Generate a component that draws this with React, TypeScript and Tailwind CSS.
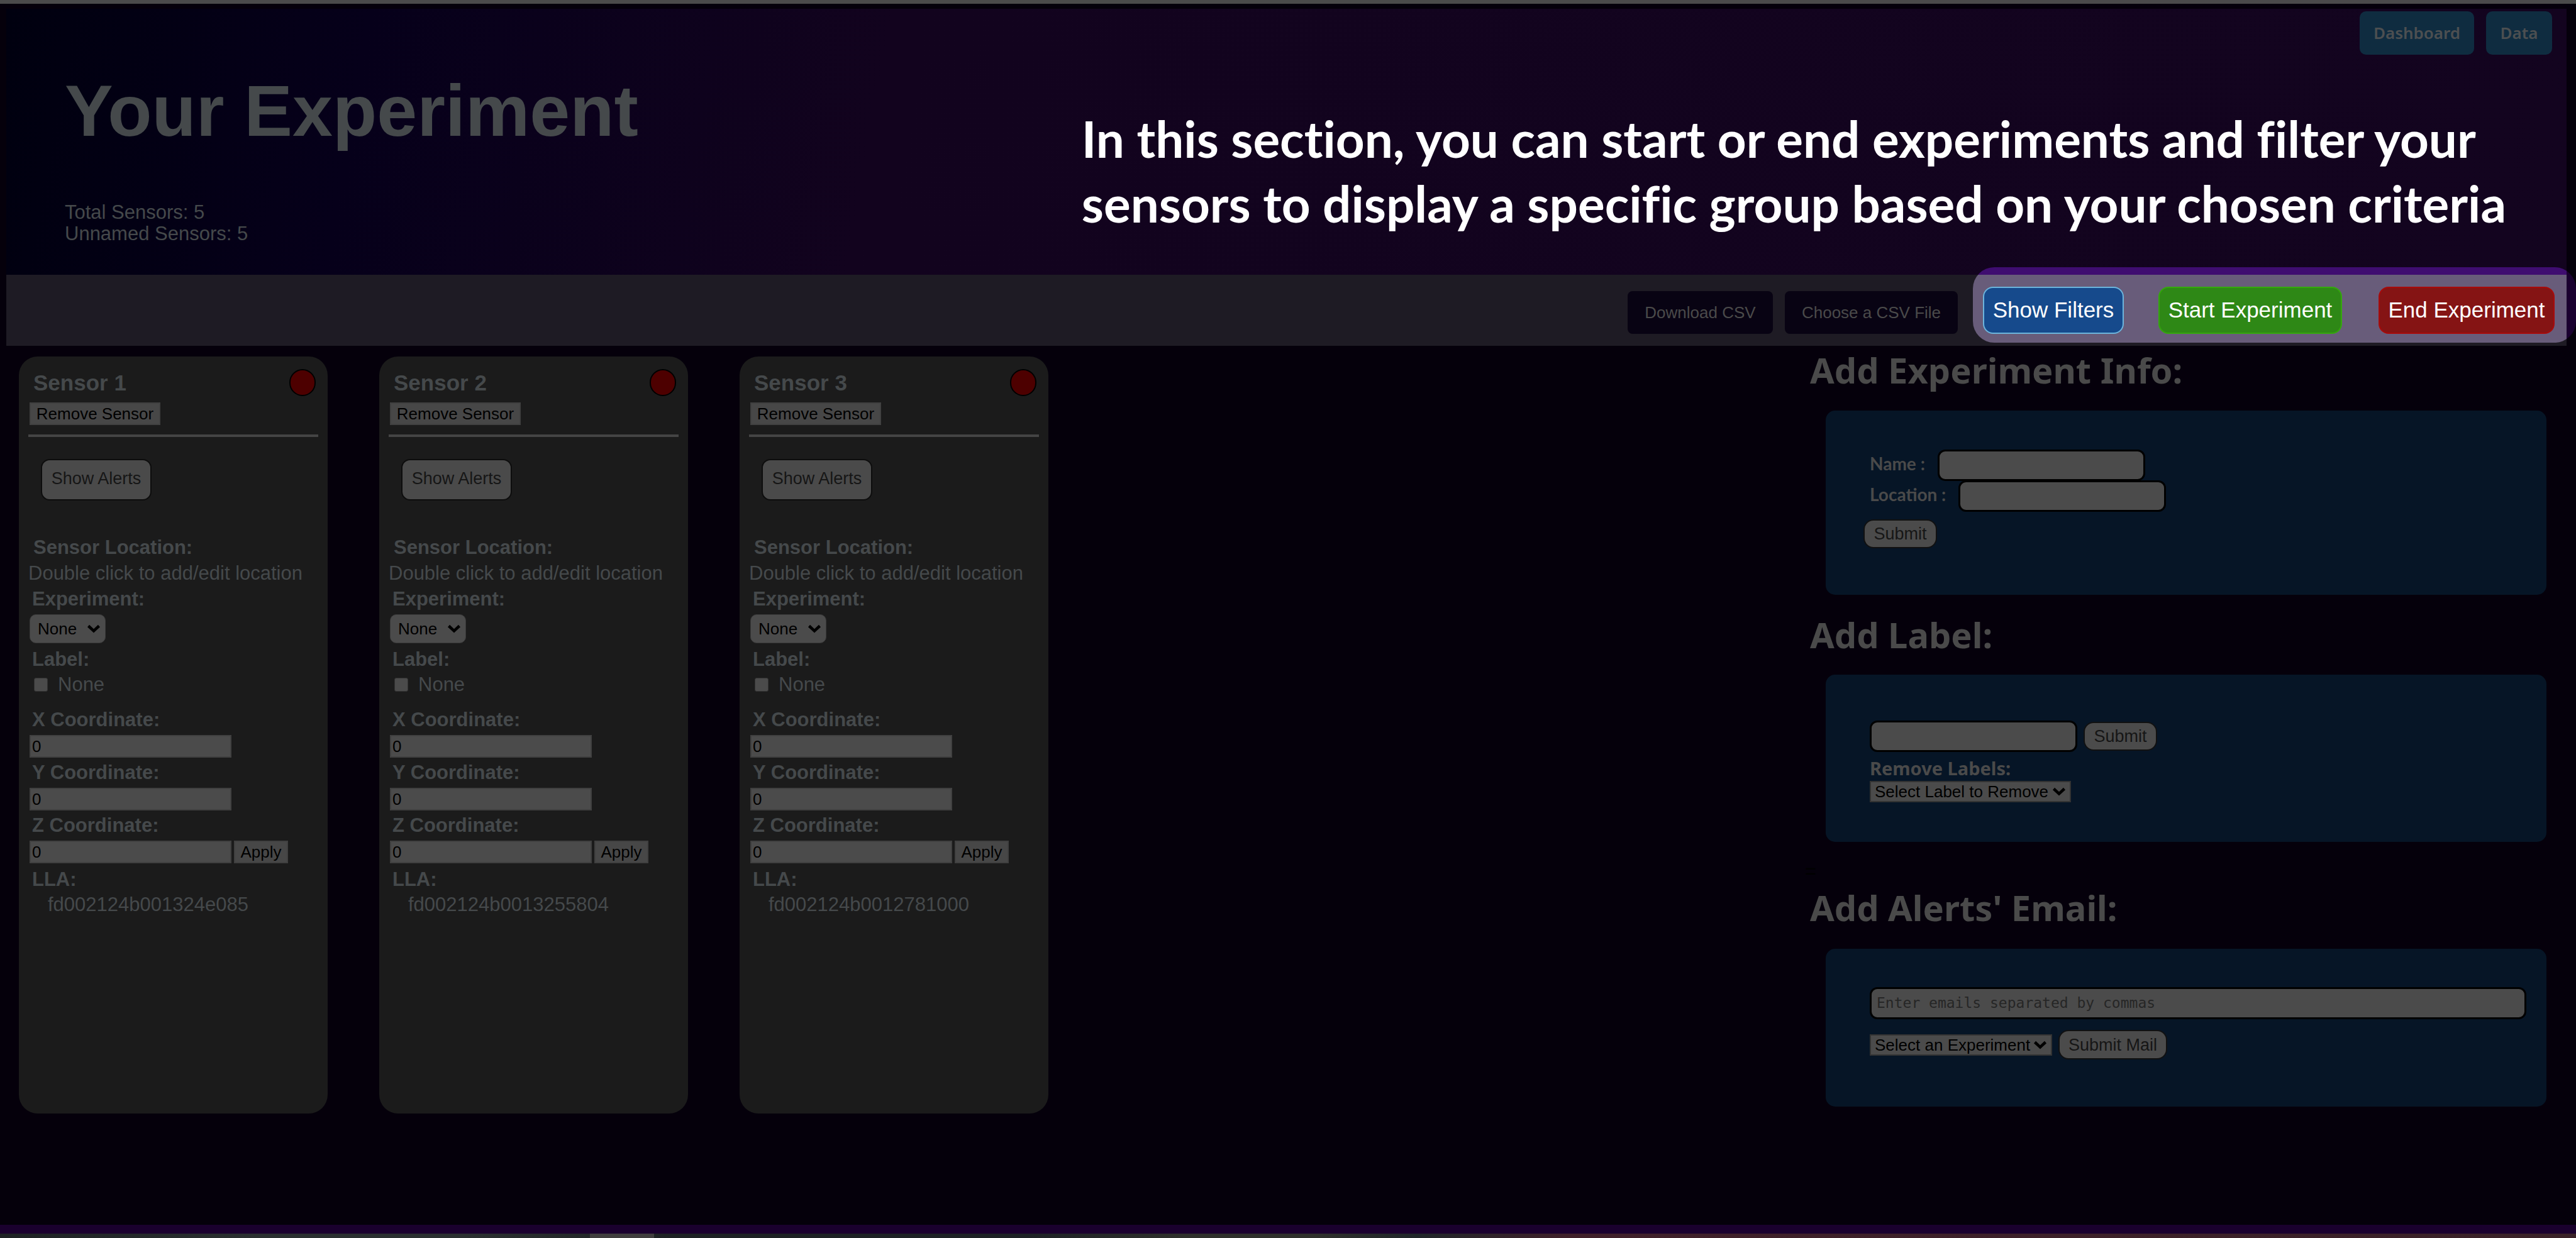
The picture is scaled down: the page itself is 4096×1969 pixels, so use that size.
import React from "react";

const sensors = [
  { id: 1, lla: "fd002124b001324e085" },
  { id: 2, lla: "fd002124b0013255804" },
  { id: 3, lla: "fd002124b0012781000" },
];

function Chevron() {
  return (
    <svg
      aria-hidden="true"
      viewBox="0 0 22 14"
      className="pointer-events-none absolute right-2 top-1/2 h-[14px] w-[22px] -translate-y-1/2"
    >
      <path d="M2.5 2.5 L11 10.5 L19.5 2.5" fill="none" stroke="#000" strokeWidth="4.5" />
    </svg>
  );
}

function Select({ id, label, option, className }: { id: string; label: string; option: string; className: string }) {
  return (
    <span className="relative inline-flex">
      <select id={id} aria-label={label} className={"appearance-none bg-[#4b4b4b] text-[26px] leading-7 text-black " + className}>
        <option>{option}</option>
      </select>
      <Chevron />
    </span>
  );
}

function Coordinate({ axis, sensor }: { axis: string; sensor: number }) {
  const id = `${axis}-${sensor}`;
  return (
    <>
      <label htmlFor={id} className="mb-1 ml-1.5 mt-1 block text-[31px] font-bold leading-10">
        {axis} Coordinate:
      </label>
      <div className="flex gap-1 pl-0.5">
        <input
          id={id}
          type="text"
          defaultValue="0"
          className="h-9 w-[321px] border-2 border-[#404040] bg-[#4b4b4b] pl-0.5 text-[26px] leading-8 text-black"
        />
        {axis === "Z" && (
          <button type="button" className="h-9 w-[86px] border-2 border-[#404040] bg-[#474747] text-[26px] leading-8 text-black">
            Apply
          </button>
        )}
      </div>
    </>
  );
}

function SensorCard({ id, lla }: { id: number; lla: string }) {
  return (
    <article className="h-[1204px] w-[491px] shrink-0 rounded-[30px] bg-[#1b1b1b] px-[15px] text-[#45494b]">
      <div className="flex items-start justify-between pl-2 pr-1 pt-5">
        <h2 className="mt-0.5 text-[35px] font-bold leading-10">Sensor {id}</h2>
        <span className="h-[43px] w-[42px] rounded-full border-2 border-black bg-[#4d0000]" />
      </div>
      <button
        type="button"
        className="ml-0.5 mt-2.5 block h-9 w-[208px] border-2 border-[#404040] bg-[#474747] text-[26px] leading-8 text-black"
      >
        Remove Sensor
      </button>
      <hr className="mt-[15px] h-1 border-0 bg-[#454545]" />
      <button
        type="button"
        className="ml-5 mt-[35px] block h-[66px] w-[176px] rounded-[14px] border-2 border-[#0d0d0d] bg-[#4a4a4a] pb-1 text-[27px] text-[#161616]"
      >
        Show Alerts
      </button>
      <div className="mt-[55px] pl-2 text-[31px] font-bold leading-10">Sensor Location:</div>
      <div className="whitespace-nowrap text-[31px] leading-[42px]">Double click to add/edit location</div>
      <label htmlFor={`experiment-${id}`} className="block pl-1.5 text-[31px] font-bold leading-10">
        Experiment:
      </label>
      <div className="flex pl-0.5 pt-1">
        <Select
          id={`experiment-${id}`}
          label="Experiment"
          option="None"
          className="h-[46px] w-[121px] rounded-[10px] border border-[#3a3a3a] pl-3"
        />
      </div>
      <div className="mt-1.5 pl-1.5 text-[31px] font-bold leading-10">Label:</div>
      <div className="mb-4 flex h-10 items-center gap-4 pl-[9px]">
        <input
          id={`label-${id}`}
          type="checkbox"
          className="size-[22px] appearance-none rounded-[3px] border border-[#333] bg-[#4b4b4b]"
        />
        <label htmlFor={`label-${id}`} className="text-[31px] leading-10">
          None
        </label>
      </div>
      <Coordinate axis="X" sensor={id} />
      <Coordinate axis="Y" sensor={id} />
      <Coordinate axis="Z" sensor={id} />
      <div className="mt-1.5 pl-1.5 text-[31px] font-bold leading-10">LLA:</div>
      <div className="pl-[31px] text-[31px] leading-10">{lla}</div>
    </article>
  );
}

function Heading({ children }: { children: React.ReactNode }) {
  return <h2 className="font-['Noto_Sans',sans-serif] text-[56px] font-bold leading-[72px] text-[#4a4a4a]">{children}</h2>;
}

const field = "rounded-[12px] border-[3px] border-black bg-[#4b4b4b]";
const pill = "rounded-[16px] border-2 border-[#111] bg-[#4b4b4b] text-[27px] leading-8 text-[#161616]";

export default function App() {
  return (
    <div className="flex min-h-screen flex-col bg-[#05000b] font-['Liberation_Sans',Arial,sans-serif]">
      <div className="h-1.5 bg-[#4b4b4b]" />
      <header className="relative ml-[10px] mr-[15px] mt-2 h-[423px] bg-[linear-gradient(100deg,#00000f_0%,#06001a_14%,#12031e_34%,#13041f_100%)] text-[#45494b]">
        <nav className="absolute right-[23px] top-1 flex gap-[19px] font-['Noto_Sans',sans-serif] text-[26px] font-semibold">
          <a href="#dashboard" className="flex h-[69px] w-[182px] items-center justify-center rounded-[10px] bg-[#0f2c40] text-[#4c4f51]">
            Dashboard
          </a>
          <a href="#data" className="flex h-[69px] w-[105px] items-center justify-center rounded-[10px] bg-[#0f2c40] text-[#4c4f51]">
            Data
          </a>
        </nav>
        <div className="flex h-full justify-between">
          <div className="pl-[93px] pt-24">
            <h1 className="text-[115px] font-bold leading-[132px]">Your Experiment</h1>
            <p className="mt-[79px] text-[31px] leading-[34px]">
              Total Sensors: 5
              <br />
              Unnamed Sensors: 5
            </p>
          </div>
          <p className="mr-[96px] whitespace-nowrap pt-[155px] font-[Lato,sans-serif] text-[80px] font-bold leading-[103px] text-white [font-variant-ligatures:none]">
            In this section, you can start or end experiments and filter your
            <br />
            sensors to display a specific group based on your chosen criteria
          </p>
        </div>
      </header>

      <section className="relative ml-[10px] mr-[15px] flex h-[113px] justify-end bg-[#1e1b24]">
        <div className="absolute -right-[15px] -top-3 flex h-[120px] w-[959px] overflow-hidden rounded-[34px]">
          <div className="flex flex-1 flex-col">
            <div className="h-3 bg-[#3f0d70]" />
            <div className="flex-1 bg-[#685c7a]" />
          </div>
          <div className="w-[15px] bg-[#1a0030]" />
        </div>
        <div className="relative mr-[19px] flex h-[94px] items-end">
          <button type="button" className="h-[68px] w-[231px] rounded-[8px] bg-[#080313] text-[26px] text-[#4a4a4a]">
            Download CSV
          </button>
          <button type="button" className="ml-[19px] h-[68px] w-[275px] rounded-[8px] bg-[#080313] text-[26px] text-[#4a4a4a]">
            Choose a CSV File
          </button>
          <button type="button" className="ml-10 h-[75px] w-[224px] rounded-[16px] border-2 border-[#6cb4dc] bg-[#164a8c] text-[35px] text-white">
            Show Filters
          </button>
          <button type="button" className="ml-[55px] h-[75px] w-[292px] rounded-[16px] border-2 border-[#34a80c] bg-[#2e8816] text-[35px] text-white">
            Start Experiment
          </button>
          <button type="button" className="ml-[58px] h-[75px] w-[280px] rounded-[16px] border-2 border-[#a80a0a] bg-[#851414] text-[35px] text-white">
            End Experiment
          </button>
        </div>
      </section>

      <main className="flex grow justify-between pl-[30px] pr-[47px]">
        <div className="flex gap-[82px] pt-[17px]">
          {sensors.map((s) => (
            <SensorCard key={s.id} id={s.id} lla={s.lla} />
          ))}
        </div>
        <aside className="w-[1171px] pt-0.5 font-[Lato,sans-serif] text-[#4a4a4a]">
          <Heading>Add Experiment Info:</Heading>
          <form className="ml-[25px] mt-[29px] h-[293px] rounded-[15px] bg-[#061526] pl-[70px] pt-[62px] text-[28px] font-bold">
            <div className="flex h-[49px] items-center gap-5">
              <label htmlFor="exp-name" className="pb-1.5">
                Name :
              </label>
              <input id="exp-name" type="text" className={"h-[50px] w-[330px] " + field} />
            </div>
            <div className="flex h-[49px] items-center gap-5">
              <label htmlFor="exp-location" className="pb-1.5">
                Location :
              </label>
              <input id="exp-location" type="text" className={"h-[50px] w-[330px] " + field} />
            </div>
            <button type="button" className={"-ml-2.5 mt-[13px] block h-[46px] w-[117px] font-['Liberation_Sans'] font-normal " + pill}>
              Submit
            </button>
          </form>

          <div className="pt-[27px]">
            <Heading>Add Label:</Heading>
          </div>
          <form className="ml-[25px] mt-7 h-[266px] rounded-[15px] bg-[#061526] pl-[70px] pt-[73px]">
            <div className="flex items-center gap-2.5">
              <input aria-label="Label name" type="text" className={"h-[50px] w-[330px] " + field} />
              <button type="button" className={"h-[46px] w-[117px] font-['Liberation_Sans'] " + pill}>
                Submit
              </button>
            </div>
            <label htmlFor="remove-label" className="mt-2 block font-['Noto_Sans',sans-serif] text-[29px] font-bold leading-9">
              Remove Labels:
            </label>
            <div className="flex pt-0.5 font-['Liberation_Sans']">
              <Select
                id="remove-label"
                label="Remove Labels"
                option="Select Label to Remove"
                className="h-[34px] w-[320px] border-2 border-[#333] pl-1.5"
              />
            </div>
          </form>

          <div className="-ml-2 mt-[26px] font-['Liberation_Sans'] text-[31px] leading-[42px] text-black">=</div>
          <Heading>Add Alerts&apos; Email:</Heading>
          <form className="ml-[25px] mt-[30px] h-[251px] rounded-[15px] bg-[#061526] pl-[70px] pr-8 pt-[61px]">
            <textarea
              aria-label="Emails"
              placeholder="Enter emails separated by commas"
              className={"block h-[51px] w-full resize-none overflow-hidden px-2 font-['DejaVu_Sans_Mono'] text-[23px] leading-[44px] placeholder:text-[#262626] " + field}
            />
            <div className="mt-[17px] flex items-center gap-2.5 font-['Liberation_Sans']">
              <Select
                id="mail-experiment"
                label="Experiment"
                option="Select an Experiment"
                className="h-[34px] w-[290px] border-2 border-[#333] pl-1.5"
              />
              <button type="button" className={"h-[47px] w-[173px] " + pill}>
                Submit Mail
              </button>
            </div>
          </form>
        </aside>
      </main>

      <div className="h-[14px] bg-[#1a002e]" />
      <div className="flex h-[7px] bg-[linear-gradient(90deg,#1e2224_0%,#2b3031_10%,#2b3031_18%,#1e2224_26%,#1e2226_40%,#2f302c_46%,#2f302c_51%,#20262a_55%,#40202a_61%,#3a2228_100%)]">
        <div className="ml-[938px] w-[102px] bg-[#403e3e]" />
      </div>
    </div>
  );
}
